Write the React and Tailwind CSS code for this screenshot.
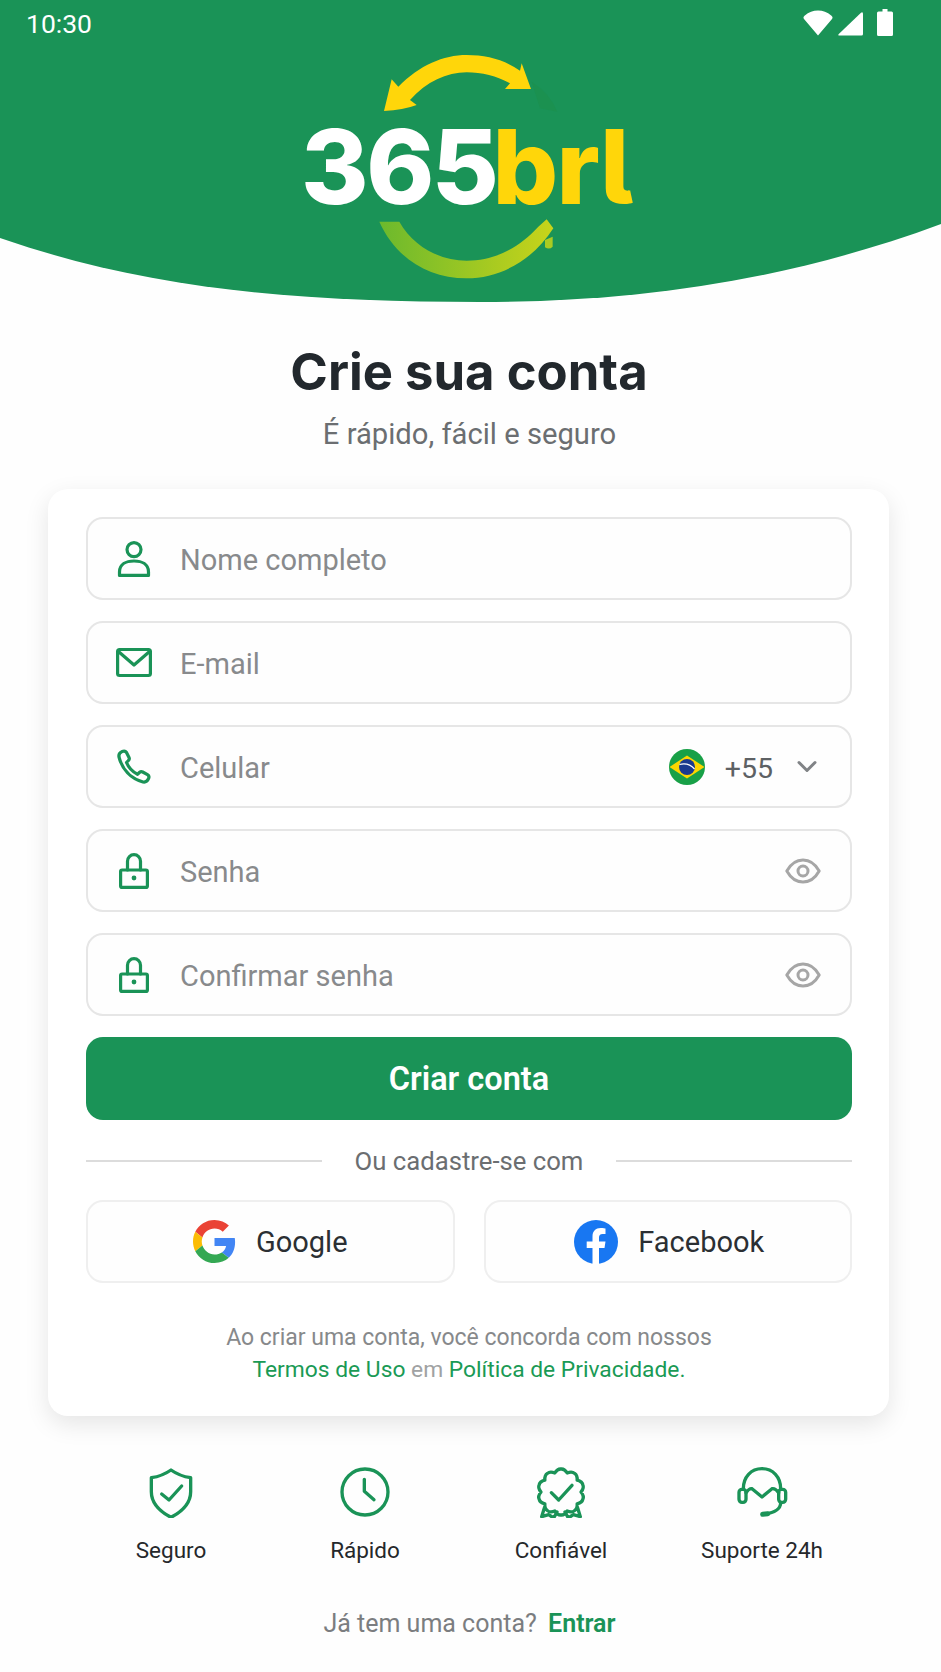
import React from "react";

const G = "#1a9357";
const Ic = ({ children, w = 36, h = 36, vb = "0 0 36 36", sw = 3.2, color = G, cls = "" }) => (
  <svg width={w} height={h} viewBox={vb} fill="none" stroke={color} strokeWidth={sw} strokeLinecap="round" strokeLinejoin="round" className={cls}>
    {children}
  </svg>
);

const UserI = () => (
  <Ic>
    <circle cx="18" cy="8.6" r="7" />
    <path d="M3.500 34.400V31C3.500 23.500 10 20 18 20S32.500 23.500 32.500 31V34.400Z" />
  </Ic>
);
const MailI = () => (
  <Ic>
    <rect x="1.600" y="4.500" width="32.800" height="26" rx="2" />
    <path d="M3 7L18 20L33 7" />
  </Ic>
);
const PhoneI = () => (
  <Ic>
    <path d="M3 8C2.500 5.500 4 3.500 6 2.600C8 1.800 9.500 2 10.500 3.500L13 8.500C13.600 9.700 13.300 10.700 12.400 11.500L10.500 13.500C12.500 18.500 16.500 22.800 21.500 25.300L23.700 23.300C24.600 22.500 25.600 22.400 26.700 23L31.500 25.700C33 26.600 33.300 28 32.500 29.700C31.500 32 29.500 33.500 27 33C14.500 29.500 6 20 3 8Z" />
  </Ic>
);
const LockI = () => (
  <Ic>
    <path d="M11.500 17V8.200a6.500 6.500 0 0 1 13 0V17" />
    <rect x="4.600" y="17" width="26.800" height="17.400" rx="1.500" />
    <circle cx="18" cy="25" r="2.400" fill={G} stroke="none" />
  </Ic>
);
const EyeI = () => (
  <Ic color="#a6a6a6" vb="0 0 36 26" h={26} sw={3} cls="mr-[1px]">
    <path d="M1.800 13C6 5.500 11.500 2 18 2S30 5.500 34.200 13C30 20.500 24.500 24 18 24S6 20.500 1.800 13Z" />
    <circle cx="18" cy="13" r="5" />
  </Ic>
);

const Field = ({ icon, label, right }) => (
  <div className="flex h-[83px] items-center rounded-[17px] border-2 border-[#e6e6e6] bg-[#fefefe] pl-[28px] pr-[28px]">
    <span className="flex w-[36px] shrink-0 justify-center">{icon}</span>
    <span className="ml-[28px] flex-1 pt-[5px] text-[29px] text-[#888a8c]">{label}</span>
    {right}
  </div>
);

const Flag = () => (
  <svg width="36" height="36" viewBox="0 0 36 36">
    <circle cx="18" cy="18" r="18" fill="#18a047" />
    <path d="M0.500 18L18 6.500L35.500 18L18 29.500Z" fill="#fcd600" />
    <circle cx="18" cy="18" r="8" fill="#1a3a8f" />
    <path d="M10.500 15.500C16.500 14 22 16 25.500 20" stroke="#fff" strokeWidth="1.200" fill="none" />
  </svg>
);

const Google = () => (
  <svg width="43" height="43" viewBox="0 0 48 48">
    <path fill="#EA4335" d="M24 9.500c3.540 0 6.710 1.220 9.210 3.600l6.850-6.850C35.900 2.380 30.470 0 24 0 14.620 0 6.510 5.380 2.560 13.220l7.980 6.190C12.430 13.720 17.740 9.500 24 9.500z" />
    <path fill="#4285F4" d="M46.980 24.550c0-1.570-.15-3.090-.38-4.550H24v9.020h12.940c-.58 2.960-2.260 5.480-4.780 7.180l7.730 6c4.510-4.180 7.090-10.360 7.090-17.650z" />
    <path fill="#FBBC05" d="M10.530 28.590c-.48-1.450-.76-2.990-.76-4.590s.27-3.140.76-4.590l-7.980-6.190C.92 16.460 0 20.120 0 24c0 3.880.92 7.540 2.560 10.780l7.970-6.190z" />
    <path fill="#34A853" d="M24 48c6.480 0 11.930-2.130 15.890-5.810l-7.730-6c-2.150 1.450-4.920 2.300-8.160 2.300-6.260 0-11.570-4.220-13.470-9.910l-7.980 6.190C6.510 42.620 14.620 48 24 48z" />
  </svg>
);
const Facebook = () => (
  <svg width="44" height="44" viewBox="0 0 44 44">
    <circle cx="22" cy="22" r="22" fill="#1877f2" />
    <path fill="#fff" d="M30.500 28L31.500 21.500H25V17.500C25 15.700 25.900 14 28.700 14H31.500V8.500C31.500 8.500 29 8 26.700 8C21.700 8 18.500 11 18.500 16.500V21.500H12.700V28H18.500V44C20.700 44.300 22.800 44.300 25 44V28Z" />
  </svg>
);

const Social = ({ icon, label, cls = "" }) => (
  <div className={`flex h-[83px] items-center justify-center gap-[20px] rounded-[17px] border-2 border-[#efefef] bg-[#fefefe] ${cls}`}>
    {icon}
    <span className="pt-[3px] text-[29px] text-[#2b2f33]">{label}</span>
  </div>
);

const Shield = () => (
  <Ic w={52} h={52} vb="45 28 156 156" sw={10}>
    <path d="M123 40C140 52 160 60 182 63V105C182 140 155 165 123 182C91 165 64 140 64 105V63C86 60 106 52 123 40Z" />
    <path d="M95 112L117 130L155 88" />
  </Ic>
);
const Clock = () => (
  <Ic w={52} h={52} vb="627 32 156 156" sw={10}>
    <circle cx="705" cy="110" r="69" />
    <path d="M703 72V108L732 133" />
  </Ic>
);
const scallop = (() => {
  const n = 10;
  const cx = 122;
  const cy = 106;
  let d = "";
  for (let i = 0; i < n; i++) {
    const a = -Math.PI / 2 + (i * 2 * Math.PI) / n;
    const b = a + Math.PI / n;
    const c = a + (2 * Math.PI) / n;
    const p = (r, t) => `${(cx + r * Math.cos(t)).toFixed(1)} ${(cy + r * Math.sin(t)).toFixed(1)}`;
    if (i === 0) d += `M${p(69, a)}`;
    d += `Q${p(71, a + Math.PI / (2.2 * n))} ${p(60, b)}Q${p(71, c - Math.PI / (2.2 * n))} ${p(69, c)}`;
  }
  return d + "Z";
})();
const Badge = () => (
  <Ic w={52} h={52} vb="44 28 156 156" sw={10}>
    <path d={scallop} />
    <path d="M93 108L115 130L155 86" />
    <path d="M72 154L64 180L85 174L100 184L110 166" />
    <path d="M172 154L180 180L159 174L144 184L134 166" />
  </Ic>
);
const Headset = () => (
  <Ic w={52} h={52} vb="650 32 156 156" sw={10}>
    <path d="M672 100C672 65 695 40 728 40S784 65 784 100" />
    <rect x="659" y="102" width="21" height="39" rx="9" />
    <rect x="778" y="102" width="21" height="39" rx="9" />
    <path d="M680 112Q690 98 698 100L728 125L758 100Q768 98 778 112" />
    <path d="M784 142C784 160 765 172 738 176" />
    <path d="M730 177L745 175" strokeWidth={15} />
  </Ic>
);

const Feature = ({ icon, label }) => (
  <div className="flex flex-col items-center">
    <div className="flex h-[52px] items-center justify-center">{icon}</div>
    <span className="mt-[18px] whitespace-nowrap text-[22.5px] leading-[28px] text-[#25282b]">{label}</span>
  </div>
);

export default function App() {
  return (
    <div className="relative h-[1672px] w-[941px] overflow-hidden bg-[#fefefe] font-['Roboto',sans-serif]">
      <header className="relative h-[303px]">
        <svg className="absolute inset-0" width="941" height="303" viewBox="0 0 941 303">
          <path fill={G} d="M0 0H941V224C790 280 640 302 480 302C300 302 150 290 0 238Z" />
        </svg>
        <div className="relative flex items-start justify-between pl-[26px] pr-[48px] pt-[9px]">
          <span className="text-[26.5px] leading-[30px] text-white">10:30</span>
          <div className="flex items-end">
            <svg width="30" height="26" viewBox="0 0 30 26" fill="#fff"><path d="M15 25.500L1 9Q-.3 7.300 1.500 5.800C6 2 10 .5 15 .5S24 2 28.500 5.800Q30.300 7.300 29 9Z" /></svg>
            <svg width="25" height="24" viewBox="0 0 25 24" fill="#fff" className="ml-[5px]"><path d="M23 .8Q25 -.5 25 2V22Q25 23.500 23.500 23.500H1.500Q-.5 23.500 .8 22Z" /></svg>
            <svg width="16" height="27" viewBox="0 0 16 27" fill="#fff" className="ml-[14px]"><path d="M5.500 0H10.500V2.500H14.500A1.500 1.500 0 0 1 16 4V25.500A1.500 1.500 0 0 1 14.500 27H1.500A1.500 1.500 0 0 1 0 25.500V4A1.500 1.500 0 0 1 1.500 2.500H5.500Z" /></svg>
          </div>
        </div>
        <div className="absolute left-[270px] top-[40px] h-[250px] w-[380px]">
          <svg className="absolute inset-0" width="380" height="250" viewBox="0 0 1140 750">
            <defs>
              <linearGradient id="arc" x1="0" y1="0" x2="1" y2="0">
                <stop offset="0" stopColor="#6cb92d" />
                <stop offset="1" stopColor="#c8d41a" />
              </linearGradient>
            </defs>
            <path fill="#1b9150" d="M785 125Q840 160 862 215L810 205Z" />
            <path fill="#ffd60a" d="M342 213L365 118L385 140C450 75 520 45 590 45C650 45 705 60 750 92L755 70L783 147L705 147L720 130C680 108 635 97 590 97C530 97 470 125 420 180L440 195Q400 210 342 213Z" />
            <path fill="url(#arc)" d="M328 545L388 545C430 620 510 662 590 662C680 662 750 620 805 560L830 538L850 565C790 660 690 715 590 715C470 715 375 650 328 545Z" />
            <path fill="#aacb22" d="M825 600L848 590L848 620Q838 630 825 622Z" />
          </svg>
          <div className="absolute left-[31px] top-[62px] flex whitespace-nowrap font-['Inter',sans-serif] text-[103px] font-extrabold leading-[130px]">
            <span className="tracking-[-2.5px] text-white">365</span>
            <span className="ml-[-4px] tracking-[-1.5px] text-[#ffd60a] [font-feature-settings:'cv05']">brl</span>
          </div>
        </div>
      </header>

      <div className="mt-[39px] text-center">
        <h1 className="pr-[3px] font-['Inter',sans-serif] text-[50.8px] font-bold leading-[60px] text-[#22282d]">Crie sua conta</h1>
        <p className="mt-[14px] pr-[2px] text-[29.2px] leading-[36px] text-[#6b6e71]">É rápido, fácil e seguro</p>
      </div>

      <main className="ml-[48px] mt-[37px] h-[927px] w-[841px] rounded-[20px] bg-white pl-[38px] pr-[37px] pt-[28px] shadow-[0_8px_24px_rgba(0,0,0,0.10)]">
        <div className="flex flex-col gap-[21px]">
          <Field icon={<UserI />} label="Nome completo" />
          <Field icon={<MailI />} label="E-mail" />
          <Field
            icon={<PhoneI />}
            label="Celular"
            right={
              <div className="flex items-center">
                <Flag />
                <span className="ml-[20px] pt-[5px] text-[28.5px] text-[#5d6164]">+55</span>
                <svg width="20" height="14" viewBox="0 0 20 14" fill="none" stroke="#808386" strokeWidth="3" strokeLinecap="round" strokeLinejoin="round" className="ml-[24px] mr-[5px]"><path d="M2 2.500L10 10.500L18 2.500" /></svg>
              </div>
            }
          />
          <Field icon={<LockI />} label="Senha" right={<EyeI />} />
          <Field icon={<LockI />} label="Confirmar senha" right={<EyeI />} />
          <button className="flex h-[83px] items-center justify-center rounded-[17px] bg-[#1a9357] pt-[1px] text-[32.5px] font-semibold text-white">Criar conta</button>
        </div>
        <div className="mt-[27px] flex items-center gap-[33px]">
          <span className="h-[2px] flex-1 bg-[#dcdcdc]"></span>
          <span className="text-[25.7px] leading-[28px] text-[#6b6e71]">Ou cadastre-se com</span>
          <span className="h-[2px] flex-1 bg-[#dcdcdc]"></span>
        </div>
        <div className="mt-[25px] grid grid-cols-2 gap-[29px]">
          <Social icon={<Google />} label="Google" />
          <Social icon={<Facebook />} label="Facebook" cls="pl-[3px]" />
        </div>
        <div className="mt-[39px] text-center text-[23px] leading-[32px]">
          <p className="text-[#87898b]">Ao criar uma conta, você concorda com nossos</p>
          <p className="text-[22.8px] text-[#1a9a55]">Termos de Uso <span className="text-[#a0a2a3]">em</span> Política de Privacidade.</p>
        </div>
      </main>

      <section className="ml-[74px] mt-[50px] grid grid-cols-[194px_194px_198px_204px]">
        <Feature icon={<Shield />} label="Seguro" />
        <Feature icon={<Clock />} label="Rápido" />
        <Feature icon={<Badge />} label="Confiável" />
        <Feature icon={<Headset />} label="Suporte 24h" />
      </section>

      <p className="mt-[45px] pr-[2px] text-center text-[25px] leading-[30px] text-[#7b7d80]">
        Já tem uma conta? <span className="ml-[5px] font-semibold text-[#1a9357]">Entrar</span>
      </p>
    </div>
  );
}
